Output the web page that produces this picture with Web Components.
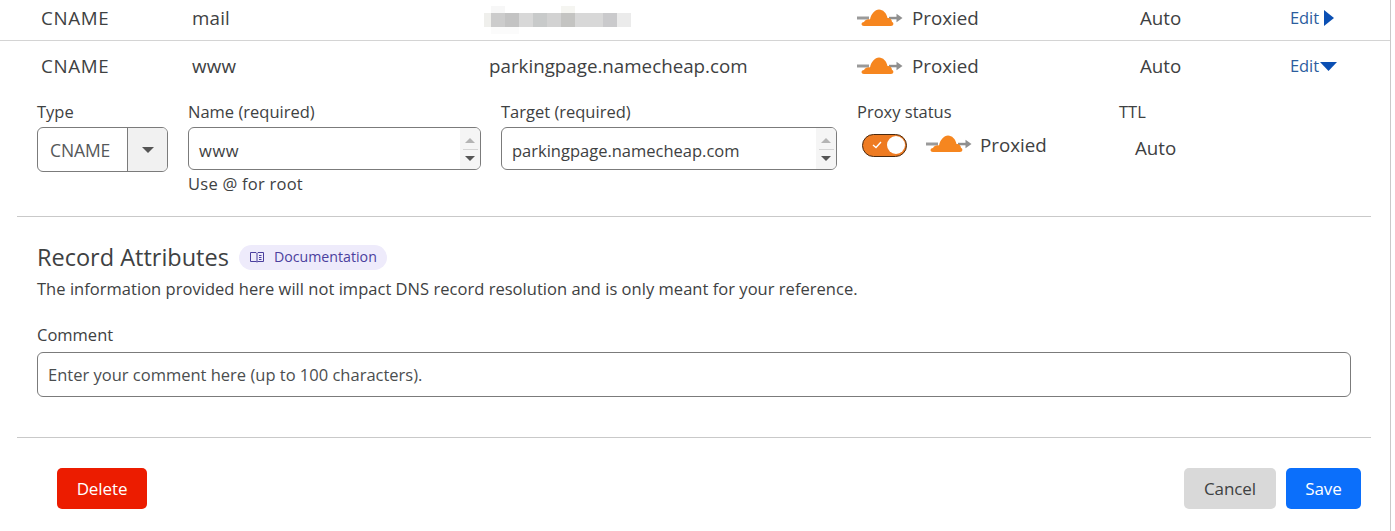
<!DOCTYPE html>
<html><head><meta charset="utf-8"><style>
html,body{margin:0;padding:0;background:#fff}
body{font-family:"Open Sans","Noto Sans",sans-serif;color:#3e4142;width:1395px;height:531px;overflow:hidden}
</style></head><body>
<dns-editor></dns-editor>
<script>
const cloud=`<svg width="46" height="18" viewBox="0 0 46 18"><path d="M0 7.500h12v3H0z" fill="#9a9a9a"/><path d="M32 7.800h9v2.500h-9z" fill="#8f8f8f"/><path d="M39.500 4.800l6 4.200-6 4.200z" fill="#8f8f8f"/><path d="M7 17C4 17 3.500 13.500 7 13 8 11 10.500 10 13 10.500 14 5 18 .5 22 .5 26 .5 29.500 4 30.500 9 33 8.500 35 10.500 35 13 37 13.500 37 17 34 17Z" fill="#f6861f"/></svg>`;
function def(name,css,html){customElements.define(name,class extends HTMLElement{constructor(){super();this.attachShadow({mode:'open'}).innerHTML=`<style>${css}</style>${typeof html==='function'?html(this):html}`}})}
def('cf-cloud',':host{display:inline-flex;width:46px;height:18px}svg{display:block}',cloud);
def('redact-block',`:host{display:grid;grid-template-columns:repeat(21,7px);grid-template-rows:7px 14px 7px;width:147px;height:28px;margin:3px 0 0 -5px}i{display:block}.w{grid-column:span 2}`,()=>{
 const cell=(c,w)=>`<i ${w?'class="w"':''} style="background:${c}"></i>`;
 const top=['#fff',...['#f7f7f7','#fff','#fff','#fff','#fff','#f5f5f1','#fff','#fff','#fff','#fff']];
 const mid=['#efefec','#cccccc','#c3c3c3','#d8d8d8','#c8caca','#d2d2d2','#c4c4c2','#d8d8d8','#d8d8d8','#cacacc','#ebebeb'];
 const bot=['#fff','#fbfbfb','#fbfbfb','#fff','#fff','#fff','#fff','#fff','#fff','#fff','#fff'];
 const row=a=>a.map((c,i)=>cell(c,i>0)).join('');
 return row(top)+row(mid)+row(bot)});
def('dns-row',`:host{display:grid;grid-template-columns:151px 297px 368px 283px 150px 1fr;padding-left:41px;height:40px;align-items:center;font-size:18.75px;line-height:24px;box-sizing:border-box}
 .p{display:flex;align-items:center;gap:9px}
 .e{display:flex;align-items:center;color:#2c5d9e;font-size:16.5px;letter-spacing:-.1px}
 svg{display:block}`,h=>{
 const g=a=>h.getAttribute(a);
 const open=g('open')!==null;
 const caret=open?`<svg width="17" height="9" viewBox="0 0 17 9" style="margin-left:1px"><path d="M0 0h17L8.500 9z" fill="#0b4fb3"/></svg>`:`<svg width="10" height="16" viewBox="0 0 10 16" style="margin-left:5px"><path d="M0 0l10 8-10 8z" fill="#0b4fb3"/></svg>`;
 return `<div style="letter-spacing:.65px">${g('type')}</div><div style="letter-spacing:.2px">${g('name')}</div><div><slot></slot></div><div class="p"><cf-cloud></cf-cloud><span>Proxied</span></div><div>Auto</div><div class="e">Edit${caret}</div>`});
def('spin-input',`:host{display:flex;box-sizing:border-box;height:43px;border:1px solid #7b7b7b;border-radius:6px;align-items:center;padding-left:10px;font-size:16.5px;position:relative;overflow:hidden;background:#fff;color:#3e4142}
 .v{flex:1;padding-top:4px}
 .s{width:20px;height:100%;background:#f5f5f5;display:flex;flex-direction:column;align-items:center;justify-content:center;gap:6px;box-sizing:border-box;padding-top:2px}
 hr{width:15px;margin:0;border:0;border-top:1px solid #d4d4d4}
 svg{display:block}`,`<div class="v"><slot></slot></div><div class="s"><svg width="10" height="5"><path d="M0 5h10L5 0z" fill="#b4b4b4"/></svg><hr><svg width="10" height="5"><path d="M0 0h10L5 5z" fill="#555"/></svg></div>`);
def('type-select',`:host{display:flex;box-sizing:border-box;width:131px;height:45px;border:1px solid #7b7b7b;border-radius:6px;overflow:hidden;font-size:17.5px;letter-spacing:-.1px;color:#55585a}
 .v{width:90px;border-right:1px solid #7b7b7b;display:flex;align-items:center;padding-left:12px;box-sizing:border-box}
 .a{flex:1;background:#f1f1f1;display:flex;align-items:center;justify-content:center}`,`<div class="v"><slot></slot></div><div class="a"><svg width="12" height="6"><path d="M0 0h12L6 6z" fill="#555"/></svg></div>`);
def('proxy-toggle',`:host{display:block;width:45px;height:23px;box-sizing:border-box;border:1.5px solid #4a2a10;border-radius:12px;background:#ee7b22;position:relative}
 b{position:absolute;right:1px;top:1px;width:18px;height:18px;border-radius:50%;background:#fff}
 svg{position:absolute;left:9px;top:6px}`,`<svg width="10" height="8" viewBox="0 0 10 8"><path d="M1 4l3 2.500L9 1" fill="none" stroke="#fff" stroke-width="1.300"/></svg><b></b>`);
def('doc-pill',`:host{display:inline-flex;align-items:center;gap:10px;height:25px;padding:0 10px 0 11px;border-radius:13px;background:#eeebfb;color:#4b3f9e;font-size:14.2px;letter-spacing:0}svg{display:block}`,`<svg width="14" height="12" viewBox="0 0 14 12" fill="none" stroke="#4b3f9e" stroke-width="1"><path d="M.5 1.500h5.500l1 1 1-1h5.500v9H8l-1 .5-1-.5H.500zM7 2.500v8M9 4.500h2.500M9 6.500h2.500M9 8.500h2.500"/></svg><span><slot></slot></span>`);
def('action-btn',`:host{display:inline-flex;align-items:center;justify-content:center;height:41px;border-radius:5px;font-size:17px;letter-spacing:-.1px;box-sizing:border-box}
 :host([kind=danger]){background:#ec1c00;color:#fff;width:90px}
 :host([kind=plain]){background:#d9d9d9;color:#3e4142;width:92px}
 :host([kind=primary]){background:#0b6ffb;color:#fff;width:75px}`,`<slot></slot>`);
def('field-label',`:host{display:block;font-size:16.5px;line-height:22px;color:#3e4142}`,`<slot></slot>`);
def('dns-editor',`:host{display:block;width:1391px;height:531px;border-right:1px solid #c9c9c9;box-sizing:border-box;overflow:hidden}
 .first{border-bottom:1px solid #d4d4d4;height:41px;box-sizing:border-box}
 .first dns-row{height:36px}
 .second{height:50px;display:flex;align-items:center}
 .second dns-row{flex:1}
 .form{display:grid;grid-template-columns:151px 313px 356px 262px 1fr;padding-left:37px;height:125px;box-sizing:border-box;padding-top:10px;align-items:start}
 .form field-label{margin-bottom:4px}
 .hint{margin-top:3px;display:block;letter-spacing:.25px}
 .proxy{display:flex;align-items:center;padding:7px 0 0 5px;gap:19px;font-size:18.75px}
 .proxy cf-cloud{margin-top:-3px}
 .proxy span{margin:-2px 0 0 -11px}
 .ttl{font-size:18.75px;padding:8px 0 0 16px}
 .rule{margin:0 19px 0 17px;border:0;border-top:1px solid #c9c9c9;height:0}
 .attrs{padding:24px 39px 0 37px;height:220px;box-sizing:border-box}
 .h{display:flex;align-items:center;gap:10px;font-size:23.5px;line-height:32px;color:#3e4142}
 .d{font-size:16.5px;line-height:24px;letter-spacing:.03px;margin-top:4px}
 .c{margin:23px 0 6px}
 .inp{box-sizing:border-box;height:45px;border:1px solid #7b7b7b;border-radius:6px;display:flex;align-items:center;padding-left:10px;font-size:16.5px;color:#4b4e4f}
 .foot{display:flex;padding:30px 29px 0 57px;align-items:flex-start;gap:10px}
 .foot .sp{flex:1}`,`
 <div class="first"><dns-row type="CNAME" name="mail"><redact-block></redact-block></dns-row></div>
 <div class="second"><dns-row open type="CNAME" name="www">parkingpage.namecheap.com</dns-row></div>
 <div class="form">
  <div><field-label>Type</field-label><type-select>CNAME</type-select></div>
  <div style="padding-right:20px"><field-label>Name (required)</field-label><spin-input><span style="letter-spacing:.6px">www</span></spin-input><field-label class="hint">Use @ for root</field-label></div>
  <div style="padding-right:20px"><field-label>Target (required)</field-label><spin-input>parkingpage.namecheap.com</spin-input></div>
  <div><field-label>Proxy status</field-label><div class="proxy"><proxy-toggle></proxy-toggle><cf-cloud></cf-cloud><span>Proxied</span></div></div>
  <div><field-label>TTL</field-label><div class="ttl">Auto</div></div>
 </div>
 <hr class="rule">
 <div class="attrs">
  <div class="h"><span>Record Attributes</span><doc-pill>Documentation</doc-pill></div>
  <div class="d">The information provided here will not impact DNS record resolution and is only meant for your reference.</div>
  <field-label class="c">Comment</field-label>
  <div class="inp">Enter your comment here (up to 100 characters).</div>
 </div>
 <hr class="rule">
 <div class="foot"><action-btn kind="danger">Delete</action-btn><div class="sp"></div><action-btn kind="plain">Cancel</action-btn><action-btn kind="primary">Save</action-btn></div>`);
</script></body></html>
